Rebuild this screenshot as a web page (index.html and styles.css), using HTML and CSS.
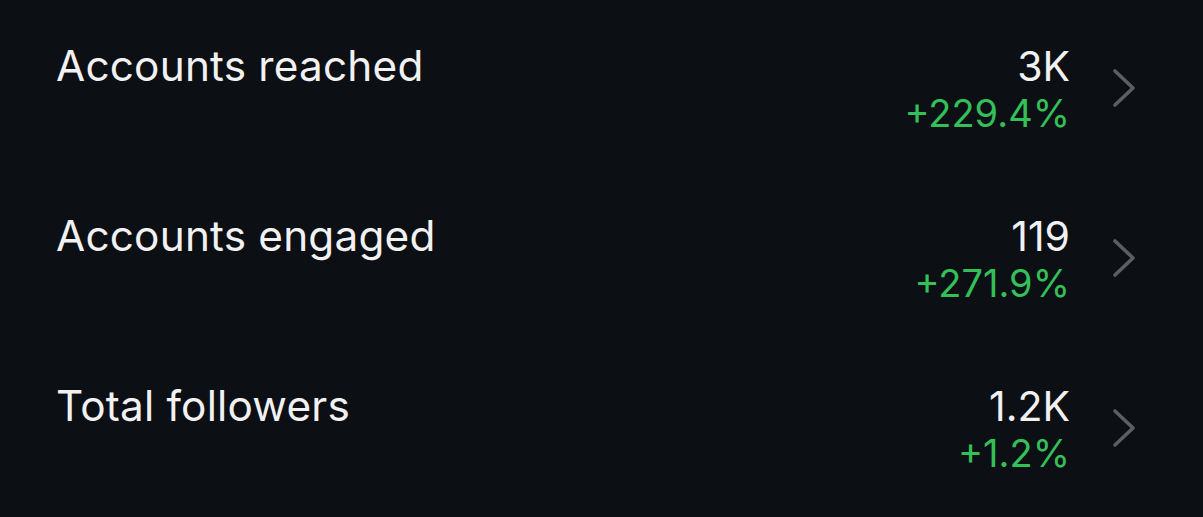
FILE: index.html
```html
<!DOCTYPE html>
<html lang="en">
<head>
<meta charset="utf-8">
<title>Insights</title>
<link rel="stylesheet" href="styles.css">
</head>
<body>
<main class="list">
  <div class="row">
    <div class="label">Accounts reached</div>
    <div class="values">
      <div class="value">3K</div>
      <div class="delta">+229.4%</div>
    </div>
    <svg class="chev" viewBox="0 0 26 40" width="26" height="40"><polyline points="3,3 21,20 3,37" fill="none" stroke="currentColor" stroke-width="3.6" stroke-linecap="round" stroke-linejoin="round"/></svg>
  </div>
  <div class="row">
    <div class="label">Accounts engaged</div>
    <div class="values">
      <div class="value">119</div>
      <div class="delta">+271.9%</div>
    </div>
    <svg class="chev" viewBox="0 0 26 40" width="26" height="40"><polyline points="3,3 21,20 3,37" fill="none" stroke="currentColor" stroke-width="3.6" stroke-linecap="round" stroke-linejoin="round"/></svg>
  </div>
  <div class="row">
    <div class="label">Total followers</div>
    <div class="values">
      <div class="value">1.2K</div>
      <div class="delta">+1.2%</div>
    </div>
    <svg class="chev" viewBox="0 0 26 40" width="26" height="40"><polyline points="3,3 21,20 3,37" fill="none" stroke="currentColor" stroke-width="3.6" stroke-linecap="round" stroke-linejoin="round"/></svg>
  </div>
</main>
</body>
</html>
```
FILE: styles.css
```css
html, body {
  margin: 0;
  padding: 0;
  background: #0c0f14;
  height: 100%;
  overflow: hidden;
}
body {
  font-family: Inter, "Liberation Sans", sans-serif;
  color: #f1f1f2;
}
.list {
  display: flex;
  flex-direction: column;
  gap: 76px;
  padding: 43px 65px 0 56px;
}
.row {
  display: flex;
  align-items: flex-start;
}
.label {
  flex: 1;
  font-size: 42.3px;
  line-height: 46px;
  letter-spacing: 0.2px;
}
.values {
  text-align: right;
}
.value {
  font-size: 41px;
  line-height: 46px;
}
.delta {
  font-size: 38px;
  line-height: 48px;
  color: #34bf58;
}
.chev {
  display: block;
  margin-left: 42px;
  margin-top: 25px;
  color: #5b5e63;
}
```
